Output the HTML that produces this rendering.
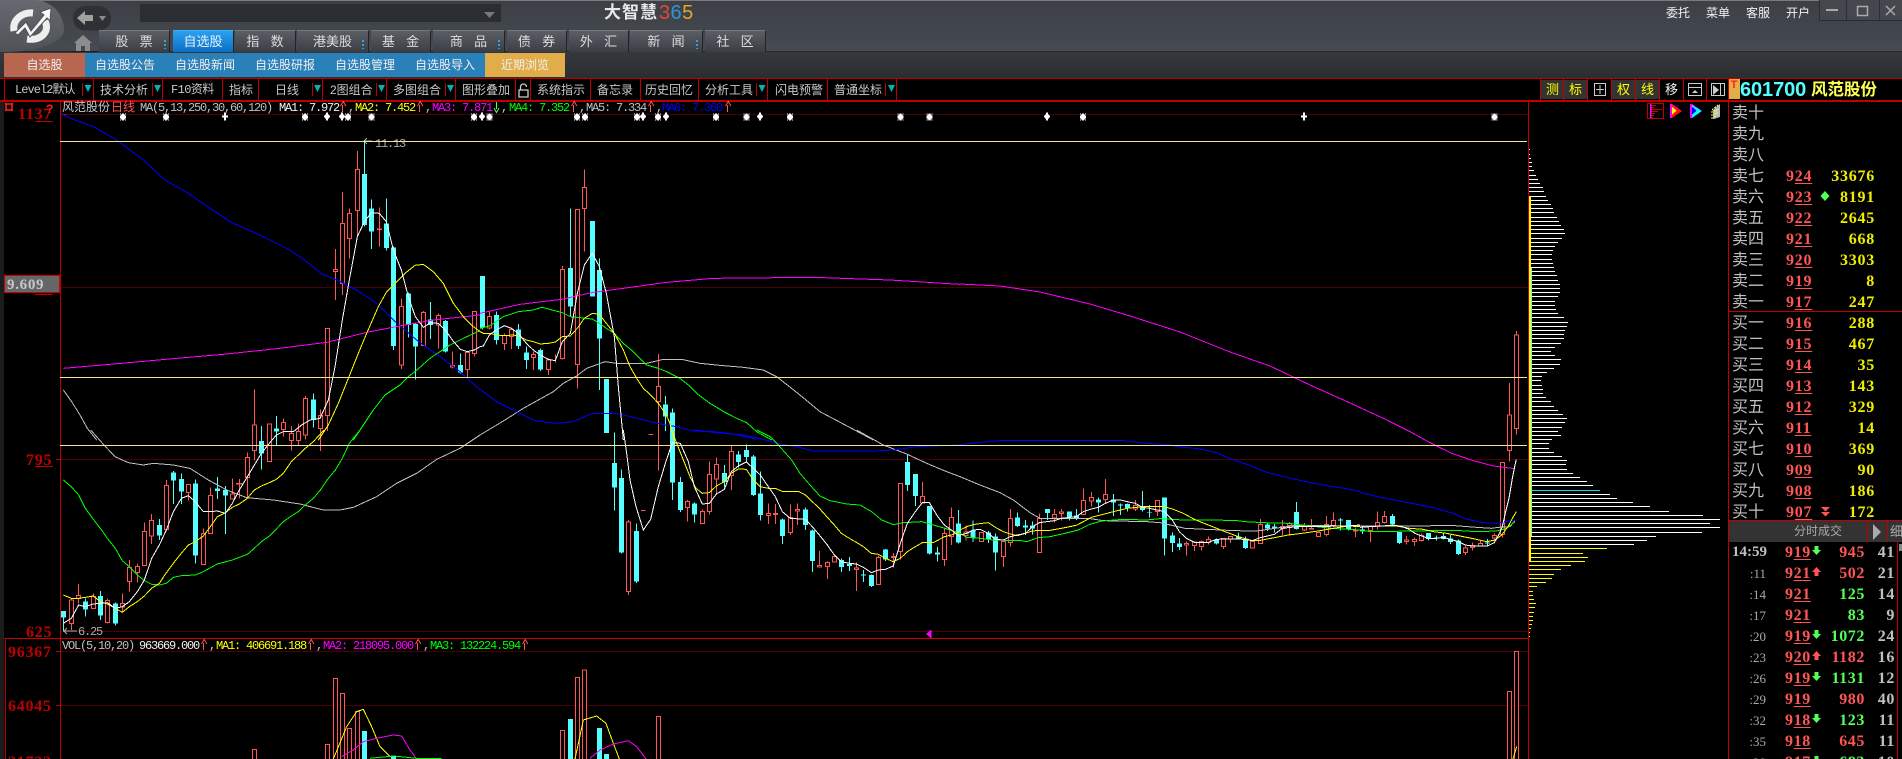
<!DOCTYPE html>
<html><head><meta charset="utf-8"><title>大智慧365</title>
<style>
*{box-sizing:border-box}
html,body{margin:0;padding:0;background:#000}
#w{position:relative;width:1902px;height:759px;overflow:hidden;background:#000;font-family:"Liberation Sans","WenQuanYi Zen Hei","Noto Sans CJK SC",sans-serif}
.a{position:absolute;white-space:nowrap}
.tab{position:absolute;top:30px;height:22px;line-height:22px;text-align:center;color:#ddd;font-size:13px;word-spacing:2px;background:linear-gradient(#5a5e65,#3b3e44);border-top:1px solid #777;border-right:1px solid #222;white-space:pre}
.tab.on{background:linear-gradient(#2aa0ee,#0d6fc4);color:#e8f4ff;border-top:1px solid #3bb0f5}
.dot{position:absolute;width:2px;top:9px;height:9px;background:repeating-linear-gradient(#1ea7e6 0 2px,transparent 2px 4px)}
.s2{position:absolute;top:53px;height:24px;line-height:24px;text-align:center;color:#f0f0f0;font-size:12px;background:#2a80b9}
.tb{position:absolute;top:79px;height:21px;line-height:22px;color:#c8c8c8;font-size:12px;white-space:nowrap}
.r{position:absolute;left:1728px;width:174px;height:21px;line-height:21px}
.l{position:absolute;left:4px;top:1px;font-size:16px;color:#c0c0c0;font-style:normal}
.p{position:absolute;left:58px;top:1px;font:bold 16px/21px "Liberation Serif",serif;letter-spacing:.75px;color:#ff5555}
.p u{text-underline-offset:2px}
.v{position:absolute;right:27px;top:1px;font:bold 16px/21px "Liberation Serif",serif;letter-spacing:.75px;color:#eeee00}
.t{position:absolute;right:136px;top:0;font:13px/21px "Liberation Serif",serif;color:#aaa}
.tt{right:135px;font:bold 15px/21px "Liberation Serif",serif;letter-spacing:0;color:#c0c0c0}
.q{position:absolute;left:57px;top:0;font:bold 16px/21px "Liberation Serif",serif;letter-spacing:.6px;color:#ff5555}
.q u{text-underline-offset:2px}
.n{position:absolute;right:37px;top:0;font:bold 16px/21px "Liberation Serif",serif;letter-spacing:.6px}
.c{position:absolute;right:7px;top:0;font:bold 16px/21px "Liberation Serif",serif;letter-spacing:.6px;color:#c0c0c0}
.g{color:#55ff55}.d{color:#ff5555}
svg text{font-family:"Liberation Mono",monospace}
.m{font-size:12px;letter-spacing:-1.2px}
.y{font-family:"Liberation Serif",serif!important;font-size:16px;font-weight:bold;letter-spacing:.75px;fill:#c00000}
</style></head><body><div id="w">

<!-- header -->
<div class="a" style="left:0;top:0;width:1902px;height:52px;background:linear-gradient(#3c4046,#464a51)"></div>
<div class="a" style="left:0;top:0;width:1820px;height:1px;background:#7a7a7a"></div>
<div class="a" style="left:0;top:51px;width:1902px;height:1px;background:#26282b"></div>
<div class="a" style="left:0;top:52px;width:1902px;height:26px;background:linear-gradient(#35383d,#2b2d31)"></div>
<div class="a" style="left:0;top:0;width:64px;height:52px;background:linear-gradient(#666a70,#4f5257);border-radius:0 30px 60px 0/0 30px 22px 0"></div>
<svg class="a" style="left:0;top:0" width="140" height="56" viewBox="0 0 140 56">
 <path d="M14 31C12 20 22 12 33 13M45 21C50 31 42 41 27 39" fill="none" stroke="#eee" stroke-width="7"/>
 <path d="M15 33l11-11 5 9 13-16-4-3 11-4-1 13-3-3-17 19-5-9-7 7z" fill="#f8f8f8" stroke="#4f5257" stroke-width="1"/>
 <rect x="73" y="6" width="38" height="24.5" rx="12" fill="#2e3034"/>
 <path d="M77 18l8-7v4h8v6h-8v4z" fill="#a0a0a0"/>
 <path d="M99 16h7l-3.500 5z" fill="#8a8a8a"/>
 <path d="M83 35l9 8h-2v8h-5v-5h-4v5h-5v-8h-2z" fill="#8c8c8c"/>
 <rect x="71" y="51" width="27" height="1" fill="#1e1e1e"/>
</svg>
<div class="a" style="left:140px;top:4px;width:361px;height:18px;background:#2a2d31"></div>
<svg class="a" style="left:484px;top:11px" width="12" height="8"><path d="M0 1h11L5.500 7z" fill="#777"/></svg>
<div class="a" style="left:604px;top:2px;font-size:17px;font-weight:bold;color:#e8e8e8;line-height:22px;letter-spacing:1px">大智慧</div>
<div class="a" style="left:659px;top:1px;font-size:20px;line-height:24px;letter-spacing:.4px"><span style="color:#e04a3a">3</span><span style="color:#2f95d8">6</span><span style="color:#e0a82e">5</span></div>

<div class="tab" style="left:99px;width:71px">股  票<span class="dot" style="left:65px"></span></div>
<div class="tab on" style="left:173px;width:61px">自选股</div>
<div class="tab" style="left:235px;width:61px">指  数</div>
<div class="tab" style="left:297px;width:72px">港美股<span class="dot" style="left:65px"></span></div>
<div class="tab" style="left:371px;width:60px">基  金</div>
<div class="tab" style="left:433px;width:72px">商  品<span class="dot" style="left:65px"></span></div>
<div class="tab" style="left:507px;width:60px">债  券</div>
<div class="tab" style="left:569px;width:60px">外  汇</div>
<div class="tab" style="left:630px;width:73px">新  闻<span class="dot" style="left:66px"></span></div>
<div class="tab" style="left:705px;width:61px">社  区</div>

<div class="a" style="left:1666px;top:5px;font-size:12px;line-height:16px;color:#f0f0f0">委托</div>
<div class="a" style="left:1706px;top:5px;font-size:12px;line-height:16px;color:#f0f0f0">菜单</div>
<div class="a" style="left:1746px;top:5px;font-size:12px;line-height:16px;color:#f0f0f0">客服</div>
<div class="a" style="left:1786px;top:5px;font-size:12px;line-height:16px;color:#f0f0f0">开户</div>
<svg class="a" style="left:1819px;top:0" width="83" height="21">
 <rect width="83" height="20" fill="#44484e"/><path d="M0 20.500H83M27.500 0V20M60.500 0V20M.5 0V20" stroke="#2c2e32" fill="none"/>
 <rect x="7" y="9" width="12" height="2" fill="#aaa"/>
 <rect x="38.500" y="6.500" width="10" height="9" fill="none" stroke="#aaa" stroke-width="1.500"/>
 <path d="M67 6l9 9M76 6l-9 9" stroke="#aaa" stroke-width="1.500"/>
</svg>

<div class="s2" style="left:4px;width:81px;background:#b8664f">自选股</div>
<div class="s2" style="left:85px;width:80px">自选股公告</div>
<div class="s2" style="left:165px;width:80px">自选股新闻</div>
<div class="s2" style="left:245px;width:80px">自选股研报</div>
<div class="s2" style="left:325px;width:80px">自选股管理</div>
<div class="s2" style="left:405px;width:80px">自选股导入</div>
<div class="s2" style="left:485px;width:80px;background:#e0ad4a">近期浏览</div>

<!-- toolbar text -->
<div class="tb" style="left:15px;font-family:'Liberation Mono','WenQuanYi Zen Hei',monospace;letter-spacing:-.95px">Level2默认</div>
<div class="tb" style="left:100px">技术分析</div>
<div class="tb" style="left:171px;font-family:'Liberation Mono','WenQuanYi Zen Hei',monospace;letter-spacing:-.6px">F10资料</div>
<div class="tb" style="left:229px">指标</div>
<div class="tb" style="left:275px">日线</div>
<div class="tb" style="left:330px">2图组合</div>
<div class="tb" style="left:393px">多图组合</div>
<div class="tb" style="left:462px">图形叠加</div>
<div class="tb" style="left:537px">系统指示</div>
<div class="tb" style="left:597px">备忘录</div>
<div class="tb" style="left:645px">历史回忆</div>
<div class="tb" style="left:705px">分析工具</div>
<div class="tb" style="left:775px">闪电预警</div>
<div class="tb" style="left:834px">普通坐标</div>
<div class="a" style="left:1728px;top:79px;width:12px;height:20px;background:#e0ad4a;color:#ff2020;font:bold 11px/13px 'Liberation Sans',sans-serif;text-align:center">T</div>
<div class="a" style="left:1740px;top:78px;font:bold 20px/24px 'Liberation Sans',sans-serif;color:#55ffff;letter-spacing:-.1px">601700</div>
<div class="a" style="left:1811px;top:78px;font-size:16.500px;font-weight:bold;line-height:24px;color:#ffff55">风范股份</div>

<!-- order book -->
<div class="r" style="top:102px"><i class="l">卖十</i></div>
<div class="r" style="top:123px"><i class="l">卖九</i></div>
<div class="r" style="top:144px"><i class="l">卖八</i></div>
<div class="r" style="top:165px"><i class="l">卖七</i><span class="p">9<u>24</u></span><span class="v">33676</span></div>
<div class="r" style="top:186px"><i class="l">卖六</i><span class="p">9<u>23</u></span><span class="v">8191</span></div>
<div class="r" style="top:207px"><i class="l">卖五</i><span class="p">9<u>22</u></span><span class="v">2645</span></div>
<div class="r" style="top:228px"><i class="l">卖四</i><span class="p">9<u>21</u></span><span class="v">668</span></div>
<div class="r" style="top:249px"><i class="l">卖三</i><span class="p">9<u>20</u></span><span class="v">3303</span></div>
<div class="r" style="top:270px"><i class="l">卖二</i><span class="p">9<u>19</u></span><span class="v">8</span></div>
<div class="r" style="top:291px"><i class="l">卖一</i><span class="p">9<u>17</u></span><span class="v">247</span></div>
<div class="r" style="top:312px"><i class="l">买一</i><span class="p">9<u>16</u></span><span class="v">288</span></div>
<div class="r" style="top:333px"><i class="l">买二</i><span class="p">9<u>15</u></span><span class="v">467</span></div>
<div class="r" style="top:354px"><i class="l">买三</i><span class="p">9<u>14</u></span><span class="v">35</span></div>
<div class="r" style="top:375px"><i class="l">买四</i><span class="p">9<u>13</u></span><span class="v">143</span></div>
<div class="r" style="top:396px"><i class="l">买五</i><span class="p">9<u>12</u></span><span class="v">329</span></div>
<div class="r" style="top:417px"><i class="l">买六</i><span class="p">9<u>11</u></span><span class="v">14</span></div>
<div class="r" style="top:438px"><i class="l">买七</i><span class="p">9<u>10</u></span><span class="v">369</span></div>
<div class="r" style="top:459px"><i class="l">买八</i><span class="p">9<u>09</u></span><span class="v">90</span></div>
<div class="r" style="top:480px"><i class="l">买九</i><span class="p">9<u>08</u></span><span class="v">186</span></div>
<div class="r" style="top:501px"><i class="l">买十</i><span class="p">9<u>07</u></span><span class="v">172</span></div>

<!-- tick header -->
<div class="a" style="left:1729px;top:521px;width:173px;height:21px;background:#333"></div>
<div class="a" style="left:1794px;top:521px;font-size:12px;line-height:21px;color:#aaa">分时成交</div>
<div class="a" style="left:1890px;top:521px;font-size:13px;line-height:21px;color:#aaa">细</div>

<!-- ticks -->
<div class="r" style="top:542px"><span class="t tt">14:59</span><span class="q">9<u>19</u></span><span class="n d">945</span><span class="c">41</span></div>
<div class="r" style="top:563px"><span class="t">:11</span><span class="q">9<u>21</u></span><span class="n d">502</span><span class="c">21</span></div>
<div class="r" style="top:584px"><span class="t">:14</span><span class="q">9<u>21</u></span><span class="n g">125</span><span class="c">14</span></div>
<div class="r" style="top:605px"><span class="t">:17</span><span class="q">9<u>21</u></span><span class="n g">83</span><span class="c">9</span></div>
<div class="r" style="top:626px"><span class="t">:20</span><span class="q">9<u>19</u></span><span class="n g">1072</span><span class="c">24</span></div>
<div class="r" style="top:647px"><span class="t">:23</span><span class="q">9<u>20</u></span><span class="n d">1182</span><span class="c">16</span></div>
<div class="r" style="top:668px"><span class="t">:26</span><span class="q">9<u>19</u></span><span class="n g">1131</span><span class="c">12</span></div>
<div class="r" style="top:689px"><span class="t">:29</span><span class="q">9<u>19</u></span><span class="n d">980</span><span class="c">40</span></div>
<div class="r" style="top:710px"><span class="t">:32</span><span class="q">9<u>18</u></span><span class="n g">123</span><span class="c">11</span></div>
<div class="r" style="top:731px"><span class="t">:35</span><span class="q">9<u>18</u></span><span class="n d">645</span><span class="c">11</span></div>
<div class="r" style="top:752px"><span class="t">:38</span><span class="q">9<u>17</u></span><span class="n g">683</span><span class="c">10</span></div>

<!-- chart -->
<svg class="a" style="left:0;top:0;pointer-events:none" width="1902" height="759" viewBox="0 0 1902 759">
<defs>
 <path id="s" d="M-1-3h2v1h1v-1h1v1h-1v1h1v3h-1v1h1v1h-1v-1h-1v1h-2v-1h-1v1h-1v-1h1v-1h-1v-3h1v-1h-1v-1h1v1h1z" fill="#fff"/>
 <path id="o" d="M-1-4h2v2h1v1h1v2h-1v1h-1v2h-2v-2h-1v-1h-1v-2h1v-1h1z" fill="#fff"/>
 <path id="x" d="M-1-4h2v3h2v2h-2v3h-2v-3h-2v-2h2z" fill="#fff"/>
 <path id="au" d="M-4.500 0L0-5 4.500 0H2v4h-4V0z" fill="#ff5555"/>
 <path id="ad" d="M-4.500 0L0 5 4.500 0H2v-4h-4V0z" fill="#55ff55"/>
 <path id="ru" d="M-1.500 5V-2M-3.500-1L-.8-5.500 1.900-1" fill="none" stroke="#ff5555"/>
 <path id="gd" d="M-.5-5V2M-3 1L-.5 5.500 2 1" fill="none" stroke="#55ff55"/>
</defs>
<g shape-rendering="crispEdges">
 <rect x="0" y="101" width="4" height="658" fill="#1c1c1c"/>
 <path d="M60 114.500H1528M60 287.500H1528M60 459.500H1528M60 631.500H1528M60 651.500H1528M60 705.500H1528" stroke="#4a0000" fill="none"/>
 <path d="M56 459.500h4M56 651.500h4M56 705.500h4M60 114.500h7" stroke="#c00000" fill="none"/>
 <rect x="0" y="78" width="1902" height="1" fill="#c00000"/>
 <rect x="4" y="78" width="1" height="22" fill="#c00000"/>
 <rect x="0" y="100" width="1902" height="2" fill="#c00000"/>
 <rect x="60" y="101" width="1" height="658" fill="#c00000"/>
 <rect x="1528" y="101" width="1" height="658" fill="#c00000"/>
 <rect x="1728" y="78" width="1" height="681" fill="#c00000"/>
 <rect x="1728" y="311" width="174" height="1" fill="#c00000"/>
 <rect x="1728" y="520" width="174" height="1" fill="#c00000"/>
 <rect x="1897" y="541" width="1" height="218" fill="#c00000"/>
 <rect x="1867" y="521" width="1" height="21" fill="#c00000"/>
 <rect x="1887" y="521" width="1" height="21" fill="#c00000"/>
 <rect x="4" y="638" width="1524" height="1" fill="#d00000"/>
 <rect x="5" y="638" width="1" height="121" fill="#c00000"/>
 <!-- toolbar separators -->
 <path d="M93.500 79v21M162.500 79v21M222.500 79v21M258.500 79v21M322.500 79v21M386.500 79v21M455.500 79v21M515.500 79v21M530.500 79v21M590.500 79v21M640.500 79v21M698.500 79v21M767.500 79v21M827.500 79v21M896.500 79v21M1540.500 79v21M1563.500 79v21M1587.500 79v21M1611.500 79v21M1635.500 79v21M1659.500 79v21M1683.500 79v21M1706.500 79v21M82.500 83v13M152.500 83v13M312.500 83v13M376.500 83v13M445.500 83v13M756.500 83v13M885.500 83v13" stroke="#c00000" fill="none"/>
 <path d="M1541 80h22v19h-22zM1564 80h23v19h-23zM1612 80h23v19h-23zM1636 80h23v19h-23z" fill="#333"/>
</g>
<path d="M84.500 85h7l-3.500 7zM154 85h7l-3.500 7zM314 85h7l-3.500 7zM378 85h7l-3.500 7zM447 85h7l-3.500 7zM758.500 85h7l-3.500 7zM888 85h7l-3.500 7z" fill="#00b4b4"/>
<path d="M520.500 90v-3a3 3 0 0 1 6 0M519 90h9v7h-9z" fill="none" stroke="#ccc" stroke-width="1.300"/>
<text x="1546" y="94" font-size="13" style="font-family:'WenQuanYi Zen Hei','Noto Sans CJK SC',sans-serif" fill="#ffff00">测</text>
<text x="1569" y="94" font-size="13" style="font-family:'WenQuanYi Zen Hei','Noto Sans CJK SC',sans-serif" fill="#ffff00">标</text>
<text x="1617" y="94" font-size="13" style="font-family:'WenQuanYi Zen Hei','Noto Sans CJK SC',sans-serif" fill="#ffff00">权</text>
<text x="1641" y="94" font-size="13" style="font-family:'WenQuanYi Zen Hei','Noto Sans CJK SC',sans-serif" fill="#ffff00">线</text>
<text x="1665" y="94" font-size="13" style="font-family:'WenQuanYi Zen Hei','Noto Sans CJK SC',sans-serif" fill="#eee">移</text>
<g fill="none" stroke="#ccc" shape-rendering="crispEdges">
 <path d="M1594.500 83.500h11v12h-11zM1600 85v9M1596 89.500h8"/>
 <path d="M1688.500 83.500h13v12h-13zM1688.500 87.500h13"/>
 <path d="M1711.500 83.500h13v12h-13zM1720.500 83.500v12"/>
</g>
<path d="M1692 93l3-3 3 3z" fill="#ccc"/><path d="M1713 85l6 5-6 5z" fill="#ccc"/>

<!-- panel arrows etc -->
<path d="M1825 191l4.500 5-4.500 5-4.500-5z" fill="#55ff55"/>
<path d="M1821 507h9l-4.500 4.500zM1821 512h9l-4.500 4.500z" fill="#ff5555"/>
<path d="M1874 524l8 8-8 8z" fill="#aaa" transform="translate(-1,0)"/>
<rect x="1899" y="544" width="3" height="7" fill="#888"/>
<use href="#ad" x="1816.500" y="550"/><use href="#au" x="1816.500" y="572"/><use href="#ad" x="1816.500" y="634"/><use href="#au" x="1816.500" y="656"/><use href="#ad" x="1816.500" y="676"/><use href="#ad" x="1816.500" y="718"/><use href="#ad" x="1816.500" y="760"/>

<!-- star row -->
<g>
<use href="#s" x="123" y="116.500"/><use href="#s" x="166" y="116.500"/><use href="#x" x="225" y="116.500"/><use href="#s" x="305" y="116.500"/><use href="#o" x="327" y="116.500"/><use href="#o" x="342" y="116.500"/><use href="#s" x="348" y="116.500"/><use href="#s" x="371.500" y="116.500"/><use href="#s" x="474" y="116.500"/><use href="#o" x="482" y="116.500"/><use href="#s" x="489.500" y="116.500"/><use href="#s" x="577" y="116.500"/><use href="#s" x="585" y="116.500"/><use href="#s" x="637" y="116.500"/><use href="#o" x="643" y="116.500"/><use href="#s" x="658" y="116.500"/><use href="#o" x="666" y="116.500"/><use href="#s" x="716" y="116.500"/><use href="#s" x="746.500" y="116.500"/><use href="#o" x="760" y="116.500"/><use href="#s" x="790" y="116.500"/><use href="#s" x="900.500" y="116.500"/><use href="#s" x="929.500" y="116.500"/><use href="#o" x="1047" y="116.500"/><use href="#s" x="1083" y="116.500"/><use href="#x" x="1304" y="116.500"/><use href="#s" x="1494.500" y="116.500"/>
</g>

<!-- info rows -->
<text x="62" y="111" font-size="12" style="font-family:'WenQuanYi Zen Hei','Noto Sans CJK SC',sans-serif" fill="#c8c8c8">风范股份</text>
<text x="111" y="111" font-size="12" style="font-family:'WenQuanYi Zen Hei','Noto Sans CJK SC',sans-serif" fill="#ff5555">日线</text>
<g class="m">
<text x="140" y="111" class="m" fill="#c0c0c0">MA(5,13,250,30,60,120)</text>
<text x="279" y="111" class="m" fill="#f0f0f0">MA1: 7.972</text><use href="#ru" x="344" y="107"/><text x="348" y="111" class="m" fill="#c0c0c0">,</text>
<text x="355" y="111" class="m" fill="#ffff00">MA2: 7.452</text><use href="#ru" x="421" y="107"/><text x="425" y="111" class="m" fill="#c0c0c0">,</text>
<text x="432" y="111" class="m" fill="#ff00ff">MA3: 7.871</text><use href="#gd" x="497" y="107"/><text x="501" y="111" class="m" fill="#c0c0c0">,</text>
<text x="509" y="111" class="m" fill="#00ff00">MA4: 7.352</text><use href="#ru" x="575" y="107"/><text x="579" y="111" class="m" fill="#c0c0c0">,</text>
<text x="586" y="111" class="m" fill="#c0c0c0">MA5: 7.334</text><use href="#ru" x="652" y="107"/><text x="656" y="111" class="m" fill="#c0c0c0">,</text>
<text x="662" y="111" class="m" fill="#0000ff">MA6: 7.360</text><use href="#ru" x="729" y="107"/>
<text x="62" y="649" class="m" fill="#c0c0c0">VOL(5,10,20)</text>
<text x="139" y="649" class="m" fill="#f0f0f0">963669.000</text><use href="#ru" x="205" y="645"/><text x="209" y="649" class="m" fill="#c0c0c0">,</text>
<text x="216" y="649" class="m" fill="#ffff00">MA1: 406691.188</text><use href="#ru" x="312" y="645"/><text x="316" y="649" class="m" fill="#c0c0c0">,</text>
<text x="323" y="649" class="m" fill="#ff00ff">MA2: 218095.000</text><use href="#ru" x="419" y="645"/><text x="423" y="649" class="m" fill="#c0c0c0">,</text>
<text x="430" y="649" class="m" fill="#00ff00">MA3: 132224.594</text><use href="#ru" x="526" y="645"/>
<text x="375" y="147" class="m" fill="#aaa">11.13</text>
<text x="78" y="635" class="m" fill="#aaa">6.25</text>
</g>
<path d="M372 141l-7 0M367 138l-3 3 3 3M64 631h13M67 628l-3 3 3 3" fill="none" stroke="#aaa"/>

<!-- axis labels -->
<text x="18" y="119" class="y">1137</text><rect x="35" y="121" width="18" height="1" fill="#c00000"/>
<text x="46" y="113" font-size="12" font-weight="bold" fill="#ff2020" style="font-family:'Liberation Sans',sans-serif">?</text>
<path d="M6 104h6v6h-6zM5 103l2 2M13 103l-2 2M5 111l2-2M13 111l-2-2" fill="none" stroke="#ff2020" stroke-width="1.500"/>
<rect x="4.500" y="275.500" width="55" height="17" fill="#666" stroke="#d00000"/>
<text x="7" y="289" style="font-family:'Liberation Serif',serif;font-size:15px;font-weight:bold;letter-spacing:.7px" fill="#c8c8c8">9.609</text>
<rect x="35" y="294" width="18" height="1" fill="#c00000"/>
<text x="26" y="465" class="y">795</text><rect x="35" y="466" width="18" height="1" fill="#c00000"/>
<text x="26" y="637" class="y">625</text>
<text x="8" y="657" class="y">96367</text>
<text x="8" y="711" class="y">64045</text>
<text x="8" y="767" class="y">31723</text>

<!-- volume bars -->
<g shape-rendering="crispEdges">
<g transform="translate(0,430) scale(.33333)" stroke="#ff5555" stroke-width="3" fill="#000">
<path d="M757 958h12V1000h-12zM976 943h12V1000h-12zM1000 745h12V1000h-12zM1021 790h12V1000h-12zM1042 895h12V1000h-12zM1066 845h12V1000h-12z"/>
<path d="M1093 903V1000M1180 978V1000" stroke="#55ffff" stroke-width="15"/>
</g>
<g transform="translate(480,430) scale(.33333)" stroke="#ff5555" stroke-width="3" fill="#000">
<path d="M241 901h12V1000h-12zM286 742h12V1000h-12zM307 720h12V1000h-12zM529 859h12V1000h-12z"/>
<path d="M271 867V1000M358 894V1000M379 972V1000" stroke="#55ffff" stroke-width="15"/>
</g>
<g transform="translate(1360,420) scale(.33333)" stroke="#ff5555" stroke-width="3" fill="#000">
<path d="M442 814h12V1040h-12zM463 694h12V1040h-12z"/>
</g>
</g>
<g fill="none" stroke-width="3" shape-rendering="crispEdges">
<g transform="translate(0,430) scale(.33333)">
<polyline stroke="#ffff00" points="1000,987 1040,890 1070,845 1090,838 1115,890 1140,950 1170,980"/>
<polyline stroke="#ff00ff" points="1025,980 1060,960 1090,935 1130,925 1180,915 1205,918 1230,960 1250,987"/>
<polyline stroke="#00ff00" points="1110,985 1180,978 1250,985 1325,985"/>
</g>
<g transform="translate(480,430) scale(.33333)">
<polyline stroke="#ffff00" points="285,987 310,870 350,858 378,880 400,940 418,987"/>
<polyline stroke="#ff00ff" points="330,985 360,960 400,942 445,932 470,950 498,987"/>
</g>
<polyline transform="translate(1360,420) scale(.33333)" stroke="#ffff00" points="458,1020 470,980"/>
</g>

<!-- candles -->
<g shape-rendering="crispEdges" fill="none">
<g transform="translate(0,430) scale(.33333)">
<path stroke="#ff5555" stroke-width="3" d="M214 505V600M236 462V520M280 490V537M322 505V580M367 490V545M388 390V485M412 400V458M433 277V406M455 252V342M499 150V299M565 162V212M610 295V403M631 172V310M697 145V207M718 147V205M742 67V205"/>
<path stroke="#ff5555" stroke-width="3" fill="#000" d="M214 510m-6 0h12V580h-12zM236 497m-6 0h12V505h-12zM280 500m-6 0h12V535h-12zM322 512m-6 0h12V578h-12zM367 521m-6 0h12V531h-12zM388 412m-6 0h12V455h-12zM412 410m-6 0h12V428h-12zM433 305m-6 0h12V406h-12zM455 271m-6 0h12V318h-12zM499 166m-6 0h12V299h-12zM565 164m-6 0h12V188h-12zM610 310m-6 0h12V403h-12zM631 196m-6 0h12V310h-12zM697 192m-6 0h12V207h-12zM718 160m-8 0h16V162h-16zM742 82m-6 0h12V143h-12z"/>
<path stroke="#55ffff" stroke-width="3" d="M190 543V605M256 505V560M301 483V570M346 518V587M478 267V330M520 123V222M544 130V222M586 148V400M652 141V207M676 168V312"/>
<path stroke="#55ffff" stroke-width="15" d="M190 543V563M256 514V538M301 498V557M346 520V581M478 285V317M520 127V152M544 147V185M586 160V377M652 175V183M676 180V197"/>
</g>
<g transform="translate(0,120) scale(.33333)">
<path stroke="#ff5555" stroke-width="3" d="M763 808V1022M808 910V1025M850 895V950M874 918V992M895 910V975M916 828V958M961 868V993M982 625V933M1006 387V540M1027 216V525M1048 266V416M1072 93V350M1138 262V380M1204 535V747M1270 573V677M1315 580V686M1357 694V745M1402 695V772M1423 573V710"/>
<path stroke="#ff5555" stroke-width="3" fill="#000" d="M763 915m-6 0h12V992h-12zM808 912m-6 0h12V1025h-12zM850 907m-6 0h12V928h-12zM874 940m-6 0h12V962h-12zM895 934m-6 0h12V962h-12zM916 835m-6 0h12V945h-12zM961 886m-6 0h12V925h-12zM982 625m-6 0h12V887h-12zM1006 449m-6 0h12V455h-12zM1027 310m-6 0h12V490h-12zM1048 280m-6 0h12V356h-12zM1072 148m-6 0h12V272h-12zM1138 327m-6 0h12V329h-12zM1204 560m-6 0h12V735h-12zM1270 577m-6 0h12V677h-12zM1315 586m-6 0h12V615h-12zM1357 737m-6 0h12V741h-12zM1402 697m-6 0h12V748h-12zM1423 575m-6 0h12V700h-12z"/>
<path stroke="#55ffff" stroke-width="3" d="M784 918V1049M829 888V975M940 820V923M1093 60V320M1114 238V387M1159 235V392M1180 380V690M1225 518V653M1246 610V778M1291 546V657M1336 600V697M1381 700V760"/>
<path stroke="#55ffff" stroke-width="15" d="M784 963V1001M829 925V935M940 838V900M1093 162V315M1114 265V335M1159 310V384M1180 382V678M1225 520V615M1246 612V680M1291 598V615M1336 603V695M1381 735V757"/>
</g>
<g transform="translate(480,120) scale(.33333)">
<path stroke="#ff5555" stroke-width="3" d="M28 575V628M73 640V690M94 622V687M160 694V750M205 715V765M226 703V728M247 438V718M292 268V806M313 148V395"/>
<path stroke="#ff5555" stroke-width="3" fill="#000" d="M28 589m-6 0h12V624h-12zM73 647m-6 0h12V670h-12zM94 628m-6 0h12V649h-12zM160 703m-6 0h12V712h-12zM205 720m-6 0h12V749h-12zM247 448m-6 0h12V716h-12zM292 268m-6 0h12V734h-12zM313 202m-6 0h12V265h-12z"/>
<path stroke="#55ffff" stroke-width="3" d="M7 468V628M49 575V674M115 612V687M139 680V747M181 685V753M271 265V590M337 303V530M358 415V810M379 777V939"/>
<path stroke="#55ffff" stroke-width="15" d="M7 468V622M49 585V660M115 628V678M139 697V720M181 690V748M271 444V560M337 303V530M358 450V656M379 777V939"/>
</g>
<g transform="translate(480,430) scale(.33333)">
<path stroke="#ff5555" stroke-width="3" d="M445 270V495M535 -228V122M622 210V274M667 238V281M688 94V254M709 82V190M754 47V180M865 220V282M886 222V282M931 224V315M952 220V285M1018 363V411M1042 394V447M1063 377V398M1129 397V483M1195 376V464M1240 369V413M1261 160V388M1327 156V219M1393 295V408M1414 232V345M483 241H497M505 13H519"/>
<path stroke="#ff5555" stroke-width="3" fill="#000" d="M445 276m-6 0h12V485h-12zM535 -130m-6 0h12V-85h-12zM622 214m-6 0h12V233h-12zM667 244m-6 0h12V281h-12zM688 133m-6 0h12V245h-12zM709 103m-6 0h12V147h-12zM754 64m-6 0h12V137h-12zM865 251m-6 0h12V257h-12zM886 250m-6 0h12V254h-12zM931 263m-6 0h12V308h-12zM952 238m-6 0h12V243h-12zM1018 406m-6 0h12V411h-12zM1042 397m-6 0h12V410h-12zM1063 379m-6 0h12V396h-12zM1129 414m-6 0h12V419h-12zM1195 382m-6 0h12V464h-12zM1240 379m-6 0h12V383h-12zM1261 160m-6 0h12V364h-12zM1327 199m-6 0h12V219h-12zM1393 310m-6 0h12V389h-12zM1414 262m-6 0h12V320h-12z"/>
<path stroke="#55ffff" stroke-width="3" d="M403 8V242M424 118V370M469 280V459M556 -102V3M577 -65V210M601 141V246M643 218V278M733 105V172M775 63V112M799 43V97M820 75V198M841 124V272M907 266V342M976 232V300M997 299V426M1084 385V426M1108 381V423M1150 420V456M1174 433V471M1216 357V393M1282 75V183M1306 132V228M1348 228V373M1372 351V395M1435 240V340"/>
<path stroke="#55ffff" stroke-width="15" d="M403 99V173M424 144V367M469 303V455M556 -77V-40M577 -53V158M601 156V240M643 220V254M733 129V156M775 73V96M799 60V81M820 79V195M841 190V255M907 268V318M976 238V285M997 301V393M1084 390V411M1108 402V408M1150 433V437M1174 435V468M1216 358V388M1282 96V165M1306 132V198M1348 228V370M1372 367V374M1435 280V337"/>
</g>
<g transform="translate(960,420) scale(.33333)">
<path stroke="#ff5555" stroke-width="3" d="M18 316V362M64 337V365M130 364V441M151 267V380M238 280V398M283 267V308M304 267V302M370 205V284M394 216V259M436 177V252M526 240V273M592 241V288M679 364V407M703 366V393M724 361V392M745 349V374M790 355V387M811 349V369M877 363V386M901 297V371M967 300V345M988 306V345M1033 309V333M1054 297V327M1075 337V350M1099 288V350M1120 277V322M1186 322V351"/>
<path stroke="#ff5555" stroke-width="3" fill="#000" d="M18 336m-6 0h12V347h-12zM64 337m-6 0h12V365h-12zM130 364m-6 0h12V410h-12zM151 295m-6 0h12V368h-12zM238 295m-6 0h12V398h-12zM283 284m-6 0h12V294h-12zM304 276m-6 0h12V281h-12zM370 241m-6 0h12V284h-12zM394 232m-6 0h12V243h-12zM436 223m-6 0h12V239h-12zM526 257m-6 0h12V267h-12zM592 241m-6 0h12V274h-12zM679 370m-6 0h12V375h-12zM703 366m-6 0h12V377h-12zM724 365m-6 0h12V380h-12zM745 358m-6 0h12V367h-12zM790 355m-6 0h12V380h-12zM811 349m-6 0h12V357h-12zM877 365m-6 0h12V384h-12zM901 313m-6 0h12V371h-12zM967 320m-6 0h12V325h-12zM988 310m-6 0h12V316h-12zM1033 319m-6 0h12V330h-12zM1054 325m-6 0h12V327h-12zM1075 337m-6 0h12V350h-12zM1099 313m-6 0h12V344h-12zM1120 301m-6 0h12V316h-12zM1186 330m-6 0h12V333h-12z"/>
<path stroke="#55ffff" stroke-width="3" d="M39 301V366M85 333V369M106 340V452M172 277V321M196 300V345M217 305V344M262 267V300M328 274V302M349 267V300M415 233V277M460 222V288M481 250V285M502 250V275M547 213V275M568 255V293M613 232V407M637 337V396M658 354V390M769 355V374M835 337V357M856 349V387M922 310V333M943 312V338M1009 246V329M1141 294V332M1165 300V332"/>
<path stroke="#55ffff" stroke-width="15" d="M39 332V352M85 338V357M106 349V398M172 292V318M196 316V323M217 316V325M262 267V279M328 274V291M349 286V297M415 238V248M460 238V247M481 254V257M502 252V264M547 262V270M568 276V278M613 232V356M637 346V369M658 370V381M769 359V371M835 349V355M856 358V384M922 313V325M943 319V325M1009 276V327M1141 299V301M1165 300V328"/>
</g>
<g transform="translate(1360,420) scale(.33333)">
<path stroke="#ff5555" stroke-width="3" d="M31 316V366M52 274V328M73 273V310M139 348V374M163 352V378M184 340V365M316 378V405M337 368V392M361 360V380M403 340V364M427 127V353M448 -111V125M469 -267V44"/>
<path stroke="#ff5555" stroke-width="3" fill="#000" d="M31 318m-6 0h12V332h-12zM52 307m-6 0h12V320h-12zM73 289m-6 0h12V308h-12zM139 360m-6 0h12V364h-12zM163 358m-6 0h12V365h-12zM184 346m-6 0h12V361h-12zM316 384m-6 0h12V398h-12zM337 376m-6 0h12V382h-12zM361 370m-6 0h12V378h-12zM403 347m-6 0h12V354h-12zM427 127m-6 0h12V343h-12zM448 -15m-6 0h12V92h-12zM469 -255m-6 0h12V25h-12z"/>
<path stroke="#55ffff" stroke-width="3" d="M7 322V342M97 282V315M118 336V372M205 339V362M229 347V362M250 338V359M271 345V372M295 358V405M382 357V378"/>
<path stroke="#55ffff" stroke-width="15" d="M7 329V332M97 288V313M118 336V369M205 339V357M229 352V356M250 348V357M271 355V366M295 362V402M382 367V370"/>
</g>
</g>

<!-- moving averages -->
<g fill="none" stroke-width="3" shape-rendering="crispEdges">
<!-- gray -->
<g stroke="#c0c0c0">
<polyline transform="translate(0,120) scale(.33333)" points="190,810 215,845 240,885 262,925 290,960"/>
<polyline transform="translate(0,430) scale(.33333)" points="272,0 312,45 345,80 385,98 430,105 460,100 520,105 570,115 625,150 680,180 740,203 820,210 900,222 970,240 1020,240 1060,232 1130,200 1190,160 1250,130 1310,88 1380,55 1440,15"/>
<polyline transform="translate(480,120) scale(.33333)" points="0,945 75,900 130,865 220,815 250,790 290,768 320,745 375,725 410,730 500,730 550,718 605,718 660,730 730,737 790,742 850,750 890,770 960,825 1020,875 1090,912 1180,960"/>
<polyline transform="translate(480,430) scale(.33333)" points="1130,0 1210,45 1280,72 1340,100 1400,125 1440,140"/>
<polyline transform="translate(960,420) scale(.33333)" points="0,170 60,195 120,218 160,240 210,278 240,295 385,295 430,302 560,305 600,308 675,325 825,332 890,333 1000,317 1100,317 1200,318"/>
<polyline transform="translate(1360,420) scale(.33333)" points="0,318 285,317 350,322 395,325 415,322 450,320 465,302"/>
</g>
<!-- blue -->
<g stroke="#0000ff">
<polyline transform="translate(0,120) scale(.33333)" points="225,0 280,20 350,60 430,120 495,180 565,220 630,265 690,305 745,330 800,355 870,390 920,425 965,462 1010,480 1070,510 1130,550 1180,600 1250,660 1320,710 1380,755 1440,810"/>
<polyline stroke-width="1" points="61,114 75,120"/>
<polyline transform="translate(480,120) scale(.33333)" points="0,808 50,845 115,878 165,902 230,910 280,905 330,883 350,880 410,880 470,895 530,910 590,920 640,933 700,935 760,942 830,958"/>
<polyline transform="translate(480,430) scale(.33333)" points="640,0 700,7 790,15 850,28 890,40 950,50 1000,63 1180,63 1240,60 1310,50 1380,47 1440,45"/>
<polyline transform="translate(960,420) scale(.33333)" points="0,74 50,68 120,62 490,62 560,70 625,74 650,79 720,87 770,98 815,118 860,133 920,157 980,172 1060,190 1170,208 1200,215"/>
<polyline transform="translate(1360,420) scale(.33333)" points="0,217 60,232 140,247 220,263 280,280 315,296 370,308 410,310 430,306 465,300"/>
</g>
<!-- magenta -->
<g stroke="#ff00ff">
<polyline transform="translate(0,120) scale(.33333)" points="190,745 330,733 520,716 680,702 830,686 980,667 1100,637 1215,615 1300,600 1440,585"/>
<polyline transform="translate(480,120) scale(.33333)" points="0,580 120,553 245,538 340,517 430,505 560,487 700,475 1000,472 1230,480 1440,493"/>
<polyline stroke-width="1" points="960,284 1000,286 1040,292 1090,304 1130,316 1180,332 1230,352 1270,366 1310,385 1350,403 1387,420"/>
<polyline transform="translate(1360,420) scale(.33333)" points="80,0 150,35 210,68 275,100 340,122 400,138 465,146"/>
</g>
<!-- green -->
<g stroke="#00ff00">
<polyline transform="translate(0,430) scale(.33333)" points="190,150 214,170 236,195 256,235 280,268 301,295 322,325 346,355 367,392 388,410 412,435 433,452 455,463 478,465 499,460 520,442 544,437 586,435 610,425 652,402 697,390 742,373 763,355 784,335 808,318 829,297 850,275 874,258 895,245 916,225 940,205 961,180 985,145 1006,120 1027,85 1048,40 1072,10 1080,0"/>
<polyline transform="translate(0,120) scale(.33333)" points="1060,960 1090,915 1120,870 1155,825 1200,795 1225,770 1245,755 1290,715 1320,695 1350,675 1390,655 1440,632"/>
<polyline transform="translate(480,120) scale(.33333)" points="0,625 28,618 70,590 115,575 160,570 185,562 205,567 247,578 271,590 292,592 337,597 358,610 379,625 403,640 430,670 460,695 500,735 535,745 560,755 600,775 625,795 650,820 690,850 735,877 770,895 800,908 830,935 875,960"/>
<polyline transform="translate(480,430) scale(.33333)" points="830,0 870,20 895,45 935,90 960,130 990,165 1020,198 1050,212 1100,222 1140,225 1175,245 1205,270 1240,284 1270,278 1325,275 1350,282 1395,295 1440,310"/>
<polyline transform="translate(960,420) scale(.33333)" points="0,340 20,352 60,355 100,360 185,362 200,365 235,353 270,350 315,340 355,330 390,313 425,303 490,298 560,300 600,296 670,300 825,301 855,305 910,308 985,310 1050,318 1115,325 1200,330"/>
<polyline transform="translate(1360,420) scale(.33333)" points="0,333 60,335 150,333 285,331 350,335 410,333 440,325 465,305"/>
</g>
<!-- yellow -->
<g stroke="#ffff00">
<polyline transform="translate(0,430) scale(.33333)" points="190,495 214,505 236,505 256,502 280,498 301,515 322,522 346,535 367,547 388,530 412,515 433,498 455,475 478,460 499,428 520,400 544,370 565,345 586,335 610,318 631,290 652,260 676,248 697,232 718,222 742,205 763,180 784,168 808,158 829,148 850,130 874,95 895,75 916,55 940,35 961,12 972,0"/>
<polyline transform="translate(0,120) scale(.33333)" points="955,960 985,915 1015,850 1045,775 1075,700 1100,640 1135,560 1160,515 1185,490 1215,460 1245,436 1270,433 1300,455 1330,490 1360,550 1390,590 1420,620 1440,635"/>
<polyline transform="translate(480,120) scale(.33333)" points="0,635 10,640 30,640 49,645 73,647 100,645 120,650 139,660 160,665 181,672 205,670 226,666 247,650 271,648 292,625 313,595 337,580 358,583 379,610 403,640 430,690 450,740 470,775 490,805 512,825 535,850 556,880 570,910 583,960"/>
<polyline transform="translate(480,430) scale(.33333)" points="575,0 590,40 610,90 630,140 648,175 667,190 688,188 709,168 733,155 754,130 775,117 799,118 820,150 841,170 865,175 886,175 907,184 955,184 976,195 997,215 1018,235 1042,262 1063,285 1084,310 1108,325 1129,337 1150,350 1174,370 1195,373 1216,385 1240,395 1261,385 1282,365 1306,350 1327,338 1360,338 1393,320 1414,315 1440,305"/>
<polyline transform="translate(960,420) scale(.33333)" points="0,330 25,318 50,312 85,308 106,322 130,335 151,342 172,347 196,340 217,333 238,331 270,331 304,325 349,316 370,305 394,292 430,283 460,275 502,265 547,260 613,260 640,268 670,280 703,298 745,315 790,333 835,350 877,362 901,361 943,353 985,345 1033,339 1075,333 1120,325 1165,318 1200,320"/>
<polyline transform="translate(1360,420) scale(.33333)" points="0,322 60,318 108,318 150,325 190,328 220,335 260,340 300,348 340,356 380,365 405,360 425,345 445,318 460,290 469,275"/>
</g>
<!-- white -->
<g stroke="#ffffff">
<polyline transform="translate(0,430) scale(.33333)" points="190,580 214,565 236,525 256,530 280,522 301,520 322,518 346,535 367,530 388,515 412,485 433,450 455,385 478,345 499,300 520,245 544,205 565,197 586,215 610,245 631,245 652,243 676,250 697,220 718,180 742,140 763,105 784,70 808,40 829,15"/>
<polyline transform="translate(0,120) scale(.33333)" points="829,945 850,935 880,935 905,915 930,900 960,895 985,840 1005,740 1027,600 1048,480 1072,350 1093,305 1114,278 1138,280 1159,305 1180,390 1204,450 1225,530 1246,590 1270,622 1291,608 1315,610 1336,630 1357,660 1381,688 1402,695 1423,690 1440,680"/>
<polyline transform="translate(480,120) scale(.33333)" points="0,680 10,678 28,645 49,630 73,617 94,625 115,640 139,670 160,690 181,705 205,718 226,722 247,665 271,640 292,520 313,435 337,400 358,440 379,520 403,650 415,800 430,960"/>
<polyline transform="translate(480,430) scale(.33333)" points="430,0 440,70 450,150 468,230 490,300 512,268 535,170 556,100 577,38 601,40 625,95 643,170 667,222 688,220 709,192 733,178 754,125 775,108 799,96 820,115 841,135 865,170 886,200 907,245 931,265 976,268 997,290 1018,315 1042,345 1063,375 1084,395 1108,400 1129,402 1150,412 1174,428 1195,420 1216,418 1240,408 1261,340 1282,280 1306,245 1327,218 1348,218 1372,258 1393,285 1414,300 1440,320"/>
<polyline transform="translate(960,420) scale(.33333)" points="0,345 20,340 40,330 60,328 85,340 106,358 130,360 151,350 172,345 196,340 217,320 238,308 283,302 304,295 349,290 370,275 394,267 415,262 436,250 460,240 481,240 502,245 526,250 547,262 568,265 592,270 613,275 637,300 658,335 679,355 703,367 745,367 769,358 811,357 856,358 877,362 901,353 922,348 943,343 967,325 1009,320 1054,320 1099,320 1120,318 1165,318 1200,315"/>
<polyline transform="translate(1360,420) scale(.33333)" points="0,322 30,320 60,318 100,316 120,318 145,327 165,340 185,348 205,355 230,355 250,352 271,358 295,365 316,375 337,378 361,378 382,378 403,368 416,345 427,320 437,275 447,235 457,175 465,135 469,118"/>
</g>
</g>
<!-- horizontal yellow lines -->
<g shape-rendering="crispEdges" fill="#f5e68c">
<rect x="60" y="141" width="1467" height="1"/>
<rect x="60" y="377" width="1467" height="1"/>
<rect x="60" y="445" width="1467" height="1"/>
</g>
<path d="M931 630v8l-5-4z" fill="#ff00ff"/><rect x="930" y="630" width="1.500" height="8" fill="#ff00ff"/>

<!-- profile -->
<g shape-rendering="crispEdges">
<rect x="1529" y="196" width="2" height="366" fill="#ffff00"/>
<rect x="1531" y="267" width="1" height="269" fill="#55ffff"/>
<g transform="translate(1480,100) scale(.33333)" fill="none" stroke="#fff" stroke-width="3">
<path d="M147 148H150M147 163H150M147 175H153M147 187H156M147 199H156M147 211H162M147 226H168M147 238H174M147 250H180M147 262H189M147 274H192M153 289H198M153 301H204M153 313H213M153 325H219M153 337H222M153 352H231M153 364H237M153 376H243M153 388H252M153 400H255M153 415H246M153 427H234M153 439H225M153 451H219M153 463H216M153 478H216M153 490H219M153 502H222M156 514H225M156 526H231M156 541H234M156 553H240M156 565H240M156 577H240M156 589H234M156 604H225M156 616H225M156 628H228M156 640H234M156 652H252M156 667H264M156 679H261M156 691H255M156 703H252M156 715H252M156 730H243M156 742H225M156 754H213M156 766H225M156 778H243M156 793H240M156 805H222M156 817H201M156 829H186M156 841H183M156 856H186M156 868H189M156 880H189M156 892H198M156 904H213M156 919H222M156 931H234M156 943H249M156 955H261M156 967H255M156 982H246M156 994H234M156 1006H243M156 1018H216"/>
</g>
<g transform="translate(1360,420) scale(.33333)" fill="none" stroke-width="3">
<path stroke="#fff" d="M516 70H567M516 85H567M516 97H582M516 109H606M516 121H621M516 133H618M516 148H621M516 160H639M516 172H660M516 184H681M516 196H699M516 223H750M516 235H771M516 247H819M516 259H870M516 274H927M516 286H1029M516 298H1080M516 310H1050M516 322H1080M516 337H1026M513 349H888M513 361H861M513 373H822"/>
<path stroke="#00e0e0" d="M516 211H720"/>
<path stroke="#ffff00" d="M507 385H741M507 400H669M507 412H684M507 424H675M507 436H633M507 448H603M507 463H582M507 475H576M507 487H558M507 499H531M507 514H519M507 526H519M507 538H522M507 550H528M507 562H525M507 577H522M507 589H519M507 601H519M507 613H516M507 625H513M507 637H510M507 649H510"/>
</g>
<!-- top-right small icons -->
<g transform="translate(1480,100) scale(.33333)">
<rect x="502.500" y="10.500" width="48" height="45" fill="none" stroke="#c00000" stroke-width="3"/>
<rect x="510" y="12" width="4" height="42" fill="#ff00ff"/>
<path d="M514 16H528M514 22H522M514 28H546M514 34H534M514 40H525M514 46H522M514 52H519" stroke="#d00000" stroke-width="3"/>
<path d="M570 12h6l30 21-30 21h-6z" fill="#ff00ff"/><path d="M576 15l30 18-30 21z" fill="#ff1010"/><path d="M576 20l14 12-14 12z" fill="#ffff00"/>
<path d="M630 12h6l30 21-30 21h-6z" fill="#ff00ff"/><path d="M636 15l30 18-30 21z" fill="#00ffff"/><path d="M636 20l14 12-14 12z" fill="#0000ff"/>
<path d="M699 30l18-15h3v36l-18 6h-3z" fill="#bbb"/><path d="M696 57V30l18-15h6M705 30v21M711 27v15" stroke="#ffff55" stroke-width="3" fill="none" stroke-dasharray="6 3"/>
</g>
</g>
</svg>
</div></body></html>
